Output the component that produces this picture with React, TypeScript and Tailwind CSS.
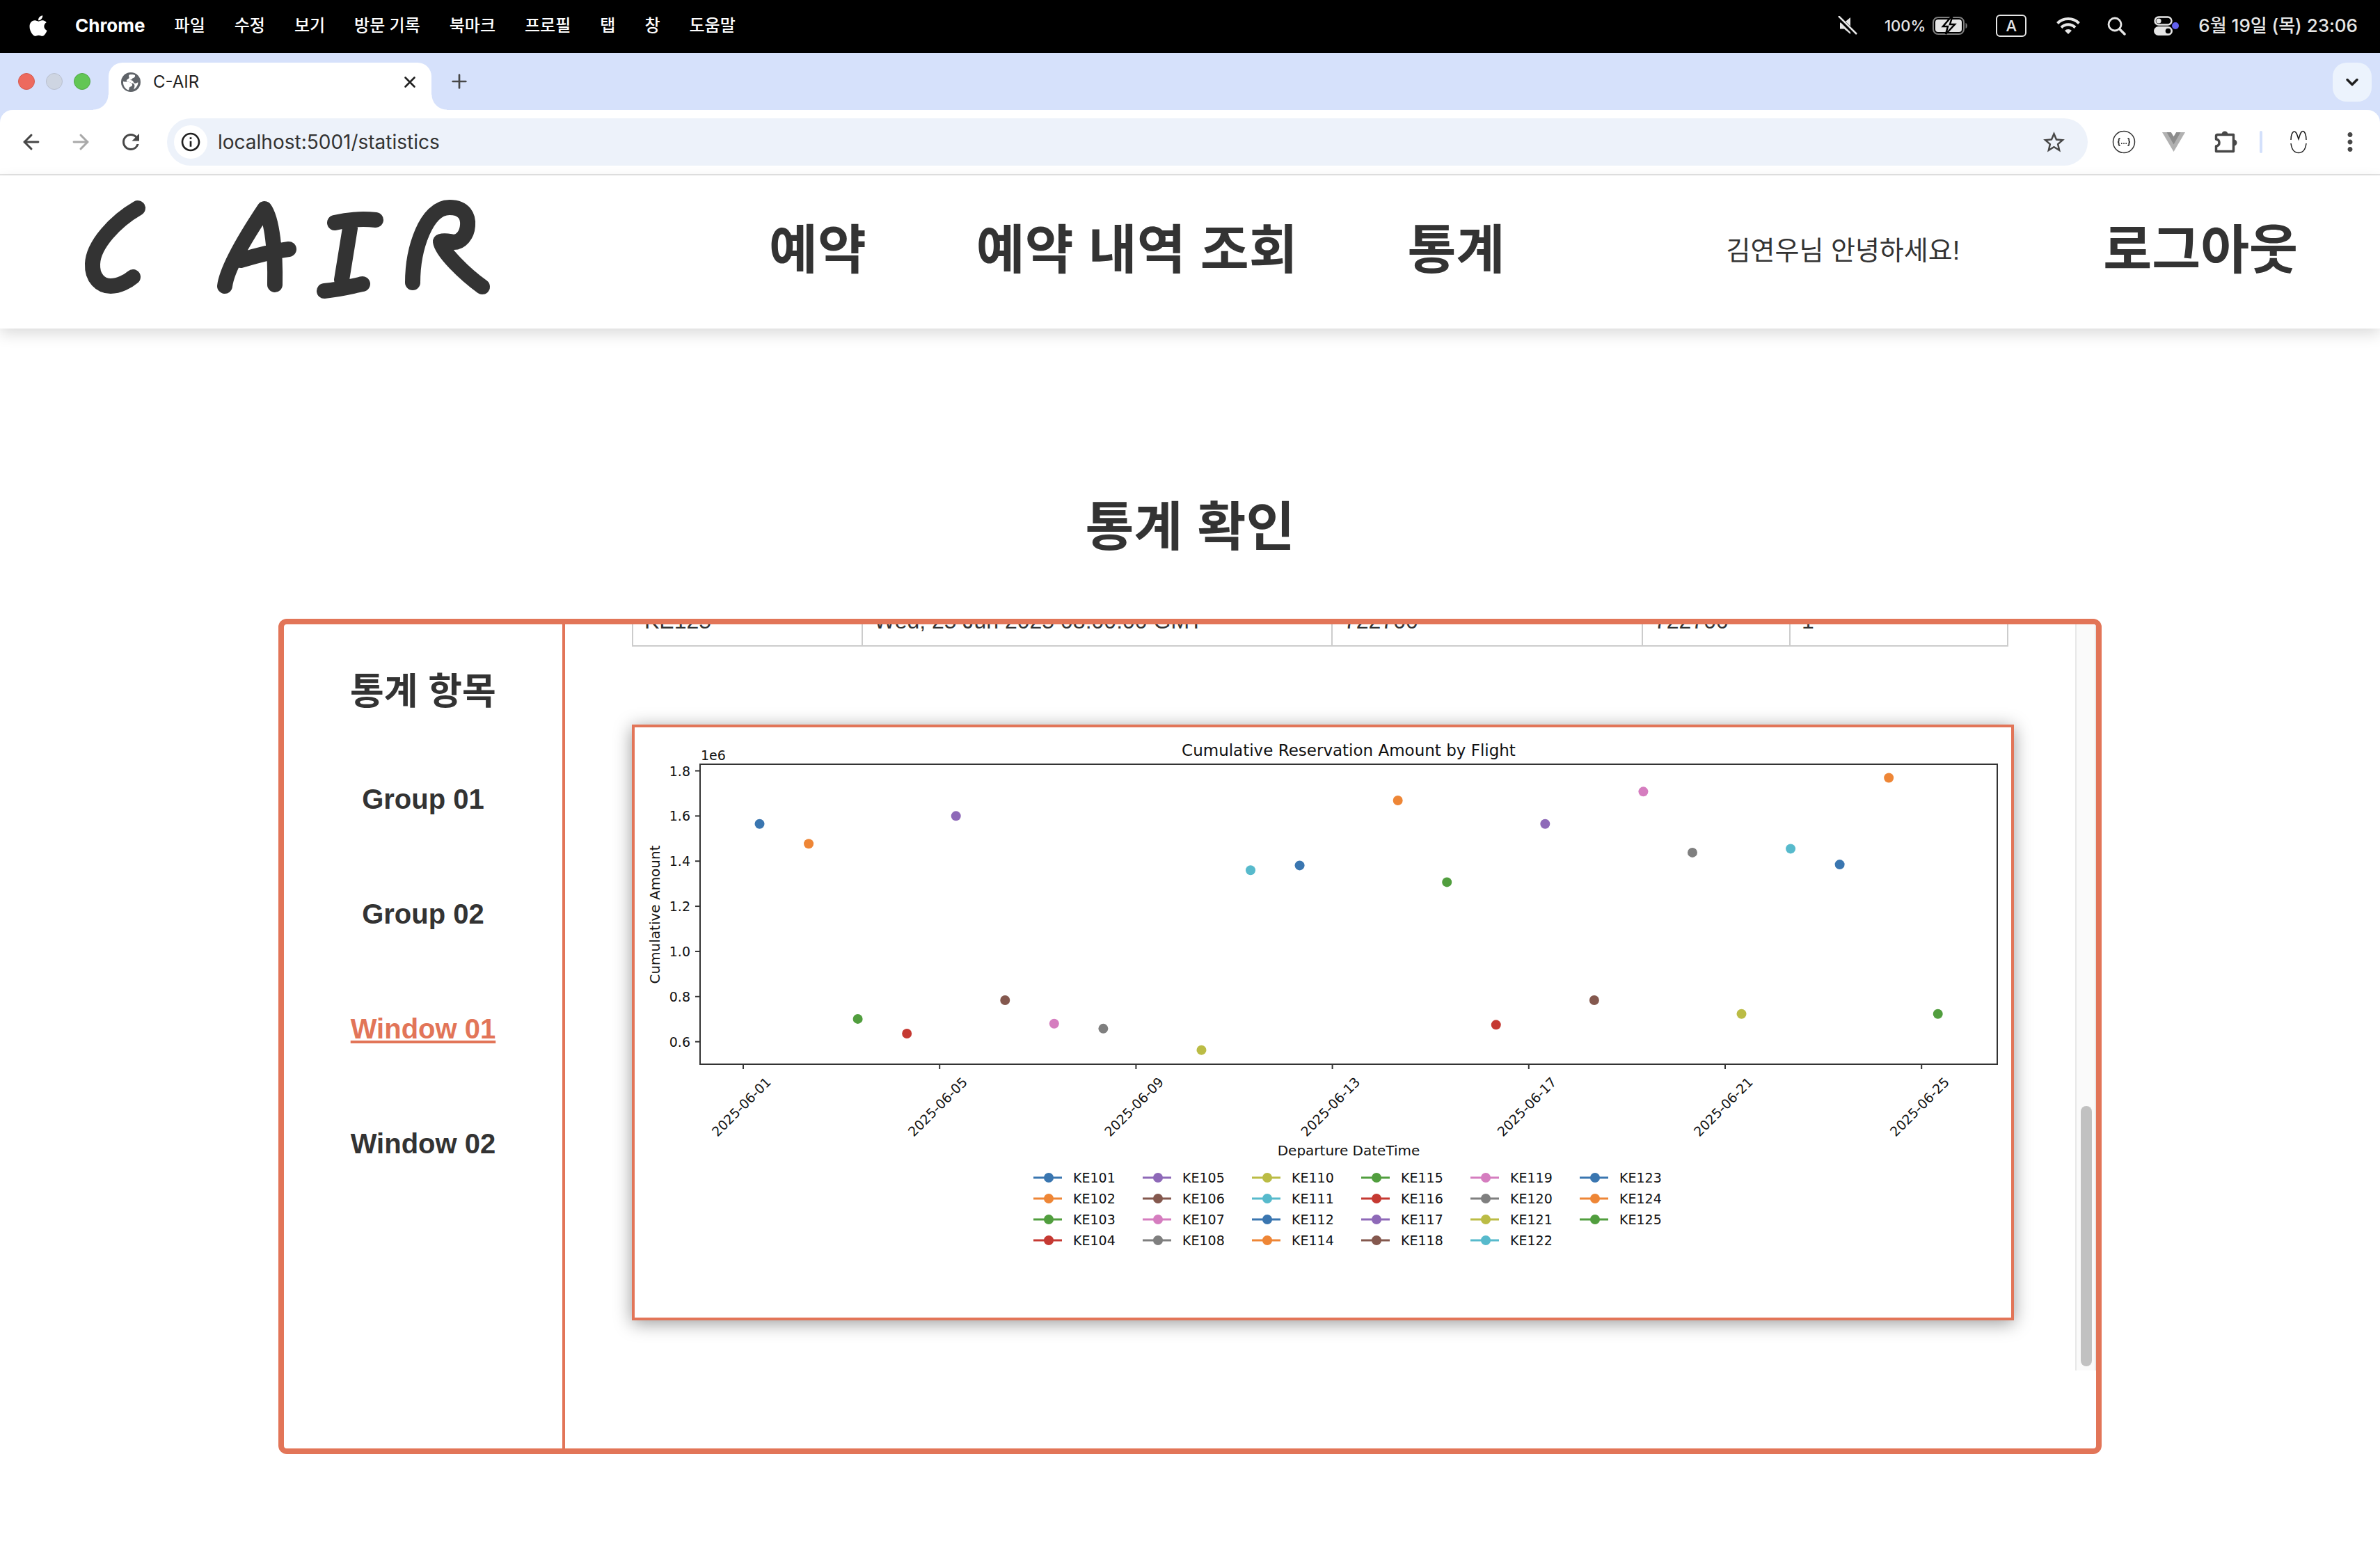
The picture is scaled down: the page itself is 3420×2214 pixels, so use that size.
import { ArrowLeft, ArrowRight, ChevronDown, Plus, X } from "lucide-react";
import { FaApple } from "react-icons/fa";
import { MdMoreVert, MdOutlineInfo, MdRefresh, MdStarOutline } from "react-icons/md";

const MENUS = ["파일", "수정", "보기", "방문 기록", "북마크", "프로필", "탭", "창", "도움말"];

function MenuBar() {
  return (
    <div className="flex h-[76px] items-center bg-black pr-[32px] pb-[2px] pl-[38px] font-['Inter','Noto_Sans_CJK_KR',sans-serif] text-[24px] leading-[36px] font-medium text-white">
      <FaApple className="size-[34px]" aria-hidden="true" />
      <nav className="ml-[36px] flex items-center gap-[42px]">
        <button className="text-[26px] font-bold">Chrome</button>
        {MENUS.map((menu) => (
          <button key={menu}>{menu}</button>
        ))}
      </nav>
      <div className="ml-auto flex items-center text-[#e6e6e6]">
        <svg className="h-[28px] w-[30px]" viewBox="0 0 30 28" fill="none">
          <path d="M4 9.500h6l9-7.500v24l-9-7.500H4z" fill="#e6e6e6" />
          <path d="M1 1l26 26" stroke="#000" strokeWidth="6" />
          <path d="M2 0l26 26" stroke="#e6e6e6" strokeWidth="2.500" />
        </svg>
        <span className="ml-[38px] text-[22px]">100%</span>
        <svg className="ml-[10px] h-[26px] w-[52px]" viewBox="0 0 52 26" fill="none">
          <rect x="1" y="1" width="44" height="24" rx="7" stroke="#7d7d7d" strokeWidth="2" />
          <rect x="4" y="4" width="38" height="18" rx="4" fill="#e6e6e6" />
          <path d="M47.500 9c3 1 3 7 0 8z" fill="#7d7d7d" />
          <path d="M26 1L15 14h7l-3 11 13-14h-7l3-10z" fill="#e6e6e6" stroke="#000" strokeWidth="2.500" />
        </svg>
        <span className="ml-[39px] flex h-[32px] w-[44px] items-center justify-center rounded-[6px] border-2 border-[#e6e6e6] text-[22px]">
          A
        </span>
        <svg className="ml-[43px] h-[26px] w-[34px]" viewBox="0 0 34 26" fill="none" stroke="#e6e6e6" strokeWidth="4">
          <path d="M1.500 9.500a22 22 0 0 1 31 0" />
          <path d="M7 15.500a14 14 0 0 1 20 0" />
          <path d="M17 25l-5-5a7 7 0 0 1 10 0z" fill="#e6e6e6" stroke="none" />
        </svg>
        <svg className="ml-[39px] h-[27px] w-[27px]" viewBox="0 0 27 27" fill="none" stroke="#e6e6e6" strokeWidth="2.800" strokeLinecap="round">
          <circle cx="11" cy="11" r="9" />
          <path d="M18 18l7 7" strokeWidth="3.500" />
        </svg>
        <svg className="ml-[40px] h-[28px] w-[36px]" viewBox="0 0 36 28" fill="none">
          <rect x="1.500" y="1.500" width="24" height="11" rx="5.500" stroke="#e6e6e6" strokeWidth="2.400" />
          <circle cx="7" cy="7" r="3.600" fill="#e6e6e6" />
          <rect x="0" y="15" width="27" height="13" rx="6.500" fill="#e6e6e6" />
          <circle cx="20.500" cy="21.500" r="3.800" fill="#000" />
          <circle cx="31" cy="14" r="5" fill="#6361ee" />
        </svg>
        <time className="ml-[28px] text-[26px] leading-[36px]">6월 19일 (목) 23:06</time>
      </div>
    </div>
  );
}

function GlobeIcon() {
  return (
    <svg className="size-[28px]" viewBox="0 0 28 28" aria-hidden="true">
      <circle cx="14" cy="14" r="14" fill="#5f6368" />
      <path d="M3 13c4 1.500 7-.500 10 1.500 1.500 1 3.500 1 3 4-.400 2-3 1.500-4 3-.800 1.500 0 3-1.500 4C6 24 2.500 19 3 13z" fill="#fff" />
      <path d="M12 3.300c3-.700 6-.300 8 .700.500 2-.500 3.500-2.500 4-2 .500-1 2.500-4.500 2.500.5 1 3 .500 4 2s1.500 4 4.500 3c1.500-.500 2-1 3-1-.500 5-3.500 8.500-6.500 10 1-3 2-5 1-7-1-2.500-4-1.500-5.500-3-1.500-1.200-4.500 0-5.500-2S11 9.500 11.500 8 10 5 12 3.300z" fill="#fff" />
    </svg>
  );
}

function TabStrip() {
  return (
    <div className="flex h-[82px] items-start bg-[#d6e1fb] pt-[14px] pr-[12px] pl-[26px] font-['Inter',sans-serif]">
      <div className="flex h-[54px] items-center gap-4">
        <button aria-label="닫기" className="size-6 rounded-full border border-[#d55a4f] bg-[#ed6a5e]" />
        <button aria-label="최소화" className="size-6 rounded-full border border-[#b9c0d0] bg-[#ced5e2]" />
        <button aria-label="확대" className="size-6 rounded-full border border-[#52a847] bg-[#62c655]" />
      </div>
      <div className="relative ml-[26px] flex h-[68px] w-[464px] items-center rounded-t-[20px] bg-white px-[18px] pb-[12px]">
        <span className="absolute bottom-0 -left-[22px] size-[22px] bg-[radial-gradient(circle_at_0_0,#d6e1fb_21px,white_22px)]" />
        <span className="absolute -right-[22px] bottom-0 size-[22px] bg-[radial-gradient(circle_at_100%_0,#d6e1fb_21px,white_22px)]" />
        <GlobeIcon />
        <span className="ml-[18px] text-[24px] leading-[32px] text-[#1f1f1f]">C-AIR</span>
        <button aria-label="탭 닫기" className="ml-auto">
          <X className="size-[26px] text-[#1f1f1f]" strokeWidth={2.4} />
        </button>
      </div>
      <button aria-label="새 탭" className="ml-[24px] flex h-[54px] items-center">
        <Plus className="size-[32px] text-[#474747]" strokeWidth={2} />
      </button>
      <button aria-label="탭 검색" className="ml-auto flex size-[56px] items-center justify-center rounded-[20px] bg-[#ecf3fd]">
        <ChevronDown className="size-[28px] text-[#1f1f1f]" strokeWidth={3} />
      </button>
    </div>
  );
}

function Toolbar() {
  return (
    <div className="bg-[#d6e1fb]">
      <div className="flex h-[94px] items-center rounded-t-[18px] border-b-2 border-[#e3e3e3] bg-white pr-[22px] pl-[28px] font-['Inter',sans-serif]">
        <button aria-label="뒤로">
          <ArrowLeft className="size-[34px] text-[#474747]" strokeWidth={2.1} />
        </button>
        <button aria-label="앞으로" className="ml-[37px]">
          <ArrowRight className="size-[34px] text-[#a9a9a9]" strokeWidth={2.1} />
        </button>
        <button aria-label="새로고침" className="ml-[37px]">
          <MdRefresh className="size-[36px] text-[#474747]" />
        </button>
        <div className="ml-[34px] flex h-[68px] flex-1 items-center rounded-full bg-[#edf2fa] pr-[30px] pl-[10px]">
          <button aria-label="사이트 정보" className="flex size-[48px] items-center justify-center rounded-full bg-white">
            <MdOutlineInfo className="size-[32px] text-[#1f1f1f]" />
          </button>
          <input
            aria-label="주소창"
            defaultValue="localhost:5001/statistics"
            className="ml-[15px] min-w-0 flex-1 bg-transparent text-[28px] leading-[36px] text-[#333333] outline-none"
          />
          <button aria-label="북마크 추가">
            <MdStarOutline className="size-[37px] text-[#474747]" />
          </button>
        </div>
        <button aria-label="JSON 뷰어" className="ml-[35px]">
          <svg className="size-[34px]" viewBox="0 0 34 34" fill="none" stroke="#333" strokeWidth="1.500">
            <circle cx="17" cy="17" r="15.500" />
            <path d="M11.500 12c-2 0-1.800 1-1.800 2.500s-.200 2.500-1.700 2.500c1.500 0 1.700 1 1.700 2.500s-.200 2.500 1.800 2.500M22.500 12c2 0 1.800 1 1.800 2.500s.200 2.500 1.700 2.500c-1.500 0-1.700 1-1.700 2.500s.200 2.500-1.800 2.500" strokeWidth="1.800" />
            <path d="M13 19.200h1.600M16.200 19.200h1.600M19.400 19.200h1.600" strokeWidth="1.800" />
          </svg>
        </button>
        <button aria-label="Vue 개발자 도구" className="ml-[38px]">
          <svg className="h-[28px] w-[33px]" viewBox="0 0 33 28">
            <path d="M0 0h33L16.500 28z" fill="#b1b1b1" />
            <path d="M6.500 0h6.500l3.500 6L20 0h6.500L16.500 17.500z" fill="#8c8c8c" />
            <path d="M12.800 0h7.400l-3.700 6z" fill="#fff" />
          </svg>
        </button>
        <button aria-label="확장 프로그램" className="ml-[40px]">
          <svg className="size-[36px]" viewBox="0 0 36 36" fill="none">
            <path d="M6.500 7.500h23v24h-25v-7.500c6-1 6-9 0-10V9.500a2 2 0 0 1 2-2z" stroke="#474747" strokeWidth="3.500" strokeLinejoin="round" />
            <path d="M12.500 7a4.500 4.500 0 0 1 9 0zM30 14.500a4.500 4.500 0 0 1 0 9z" fill="#474747" />
          </svg>
        </button>
        <span className="ml-[31px] h-[32px] w-[4px] rounded-full bg-[#d3e0fb]" />
        <button aria-label="프로필" className="ml-[39px]">
          <svg className="h-[34px] w-[26px]" viewBox="0 0 26 34" fill="none" stroke="#1f1f1f" strokeWidth="1.500">
            <path d="M2 14C2 7 4 2 7 2s4 5 6 11c2-6 3-11.500 6-11.500S24 7 24 14M2 19c1 8 4 13.500 11 13.500S23 27 24 19" />
          </svg>
        </button>
        <button aria-label="메뉴" className="ml-[40px]">
          <MdMoreVert className="size-[42px] text-[#474747]" />
        </button>
      </div>
    </div>
  );
}

function Logo() {
  return (
    <svg role="img" aria-label="C AIR" className="h-[220px] w-[592px]" viewBox="120 252 592 220" fill="none" stroke="#333" strokeWidth="22" strokeLinecap="round" strokeLinejoin="round">
      <path d="M198 299C165 318 134 352 133 379C132 400 145 411 159 411C171 411 184 404 191 398" />
      <path d="M323 411C326 386 352 342 380 300C391 315 396 362 395 409M346 374C372 366 392 361 415 358" />
      <path d="M481 320Q510 313 540 316M503 328L491 402M466 418C488 416 508 411 521 408" />
      <path d="M593 406C593 358 612 298 646 298C668 298 673 312 672 324C671 338 662 348 652 348C645 347 640 345 633 347C635 362 668 394 693 412" />
    </svg>
  );
}

function SiteHeader() {
  return (
    <header className="relative flex h-[220px] items-center bg-white pr-[118px] pl-[120px] text-[76px] leading-[90px] font-bold text-[#333] shadow-[0_8px_20px_rgba(0,0,0,0.14)]">
      <a href="#home">
        <Logo />
      </a>
      <nav className="mb-[4px] ml-[393px] flex gap-[158px]">
        <a href="#reserve">예약</a>
        <a href="#history">예약 내역 조회</a>
        <a href="#statistics">통계</a>
      </nav>
      <div className="mb-[4px] ml-auto flex items-center gap-[206px]">
        <span className="text-[38px] leading-[48px] font-normal">김연우님 안녕하세요!</span>
        <button>로그아웃</button>
      </div>
    </header>
  );
}

const GROUPS = ["Group 01", "Group 02", "Window 01", "Window 02"];

function Sidebar() {
  return (
    <aside className="flex w-[404px] shrink-0 flex-col items-center border-r-4 border-[#e27558] pt-[58px] font-bold">
      <h2 className="text-[53px] leading-[78px]">통계 항목</h2>
      <ul className="mt-[91px] flex flex-col items-center gap-[117px] text-[40px] leading-[48px]">
        {GROUPS.map((group) => (
          <li key={group}>
            <button
              className={
                group === "Window 01"
                  ? "text-[#e27558] underline decoration-4 underline-offset-3"
                  : "text-[#333]"
              }
            >
              {group}
            </button>
          </li>
        ))}
      </ul>
    </aside>
  );
}

const PALETTE = ["#3a76b0", "#ee8636", "#519e3e", "#c53932", "#8e69b8", "#84584e", "#d57dbf", "#7f7f7f", "#bbbc45", "#57bacc"];

/* [flight number, cumulative amount in millions]; the day of June is number - 100 */
const FLIGHTS: [number, number][] = [
  [101, 1.565], [102, 1.477], [103, 0.701], [104, 0.636],
  [105, 1.6], [106, 0.784], [107, 0.68], [108, 0.658],
  [110, 0.563], [111, 1.36], [112, 1.381], [114, 1.669],
  [115, 1.307], [116, 0.675], [117, 1.565], [118, 0.784],
  [119, 1.708], [120, 1.438], [121, 0.723], [122, 1.455],
  [123, 1.385], [124, 1.769], [125, 0.723],
];

const xAt = (days: number) => 156 + 70.55 * days;
const yAt = (value: number) => 62.5 + (1.8 - value) * 324.3;
const colorOf = (index: number) => PALETTE[index % PALETTE.length];

function Chart() {
  return (
    <svg role="img" aria-label="Cumulative Reservation Amount by Flight" className="block w-full font-['DejaVu_Sans',sans-serif]" viewBox="0 0 1978 848" fontSize="19" fill="#111">
      <text x="1026" y="41" fontSize="23" textAnchor="middle">Cumulative Reservation Amount by Flight</text>
      <text x="95" y="47">1e6</text>
      <rect x="94" y="53" width="1864" height="431" fill="none" stroke="#333" strokeWidth="2" />
      {["1.8", "1.6", "1.4", "1.2", "1.0", "0.8", "0.6"].map((tick) => (
        <g key={tick}>
          <path d={`M87 ${yAt(Number(tick))}h7`} stroke="#333" strokeWidth="2" />
          <text x="80" y={yAt(Number(tick)) + 7} textAnchor="end">{tick}</text>
        </g>
      ))}
      <text transform="translate(36 269) rotate(-90)" fontSize="20" textAnchor="middle">Cumulative Amount</text>
      {["01", "05", "09", "13", "17", "21", "25"].map((day) => {
        const x = xAt(Number(day) - 1);
        return (
          <g key={day}>
            <path d={`M${x} 484v7`} stroke="#333" strokeWidth="2" />
            <text transform={`translate(${x - 3} 545) rotate(-45)`} y="7" textAnchor="middle">{`2025-06-${day}`}</text>
          </g>
        );
      })}
      <text x="1026" y="615" fontSize="20" textAnchor="middle">Departure DateTime</text>
      {FLIGHTS.map(([flight, amount], i) => (
        <circle key={flight} cx={xAt(flight - 101 + 1 / 3)} cy={yAt(amount)} r="7" fill={colorOf(i)} />
      ))}
      {FLIGHTS.map(([flight], i) => (
        <g key={flight} transform={`translate(${573 + Math.floor(i / 4) * 157} ${647 + (i % 4) * 30})`}>
          <path d="M0 0h41" stroke={colorOf(i)} strokeWidth="3" />
          <circle cx="22" r="7" fill={colorOf(i)} />
          <text x="57" y="7">{`KE${flight}`}</text>
        </g>
      ))}
    </svg>
  );
}

function StatisticsContent() {
  return (
    <div className="flex h-[1072px] min-w-0 flex-1">
      <div className="flex min-w-0 flex-1 flex-col justify-end overflow-hidden pr-[88px] pb-[72px] pl-[96px]">
        <table className="mr-[8px] table-fixed border-collapse text-[32px] leading-[37px] text-[#333]">
          <tbody>
            <tr className="[&>td]:border-2 [&>td]:border-[#ccc] [&>td]:p-4">
              <td className="w-[330px]">KE125</td>
              <td className="w-[675px]">Wed, 25 Jun 2025 08:00:00 GMT</td>
              <td className="w-[446px]">722700</td>
              <td className="w-[212px]">722700</td>
              <td>1</td>
            </tr>
          </tbody>
        </table>
        <figure className="mt-[112px] shrink-0 border-4 border-[#e27558] bg-white shadow-[0_4px_24px_rgba(0,0,0,0.4)]">
          <Chart />
        </figure>
      </div>
      <div className="flex w-[30px] shrink-0 flex-col justify-end border-x-2 border-[#e8e8e8] bg-[#fafafa] pr-[4px] pb-[6px] pl-[6px]">
        <div className="h-[374px] rounded-full bg-[#c1c1c1]" />
      </div>
    </div>
  );
}

export default function App() {
  return (
    <div className="min-h-screen bg-white font-['Liberation_Sans','Noto_Sans_CJK_KR',sans-serif] text-[#333]">
      <MenuBar />
      <TabStrip />
      <Toolbar />
      <SiteHeader />
      <main className="px-[400px]">
        <h1 className="pt-[231px] text-center text-[76px] leading-[110px] font-bold">통계 확인</h1>
        <section className="mt-[76px] flex h-[1200px] overflow-hidden rounded-[12px] border-8 border-[#e27558]">
          <Sidebar />
          <StatisticsContent />
        </section>
      </main>
    </div>
  );
}
